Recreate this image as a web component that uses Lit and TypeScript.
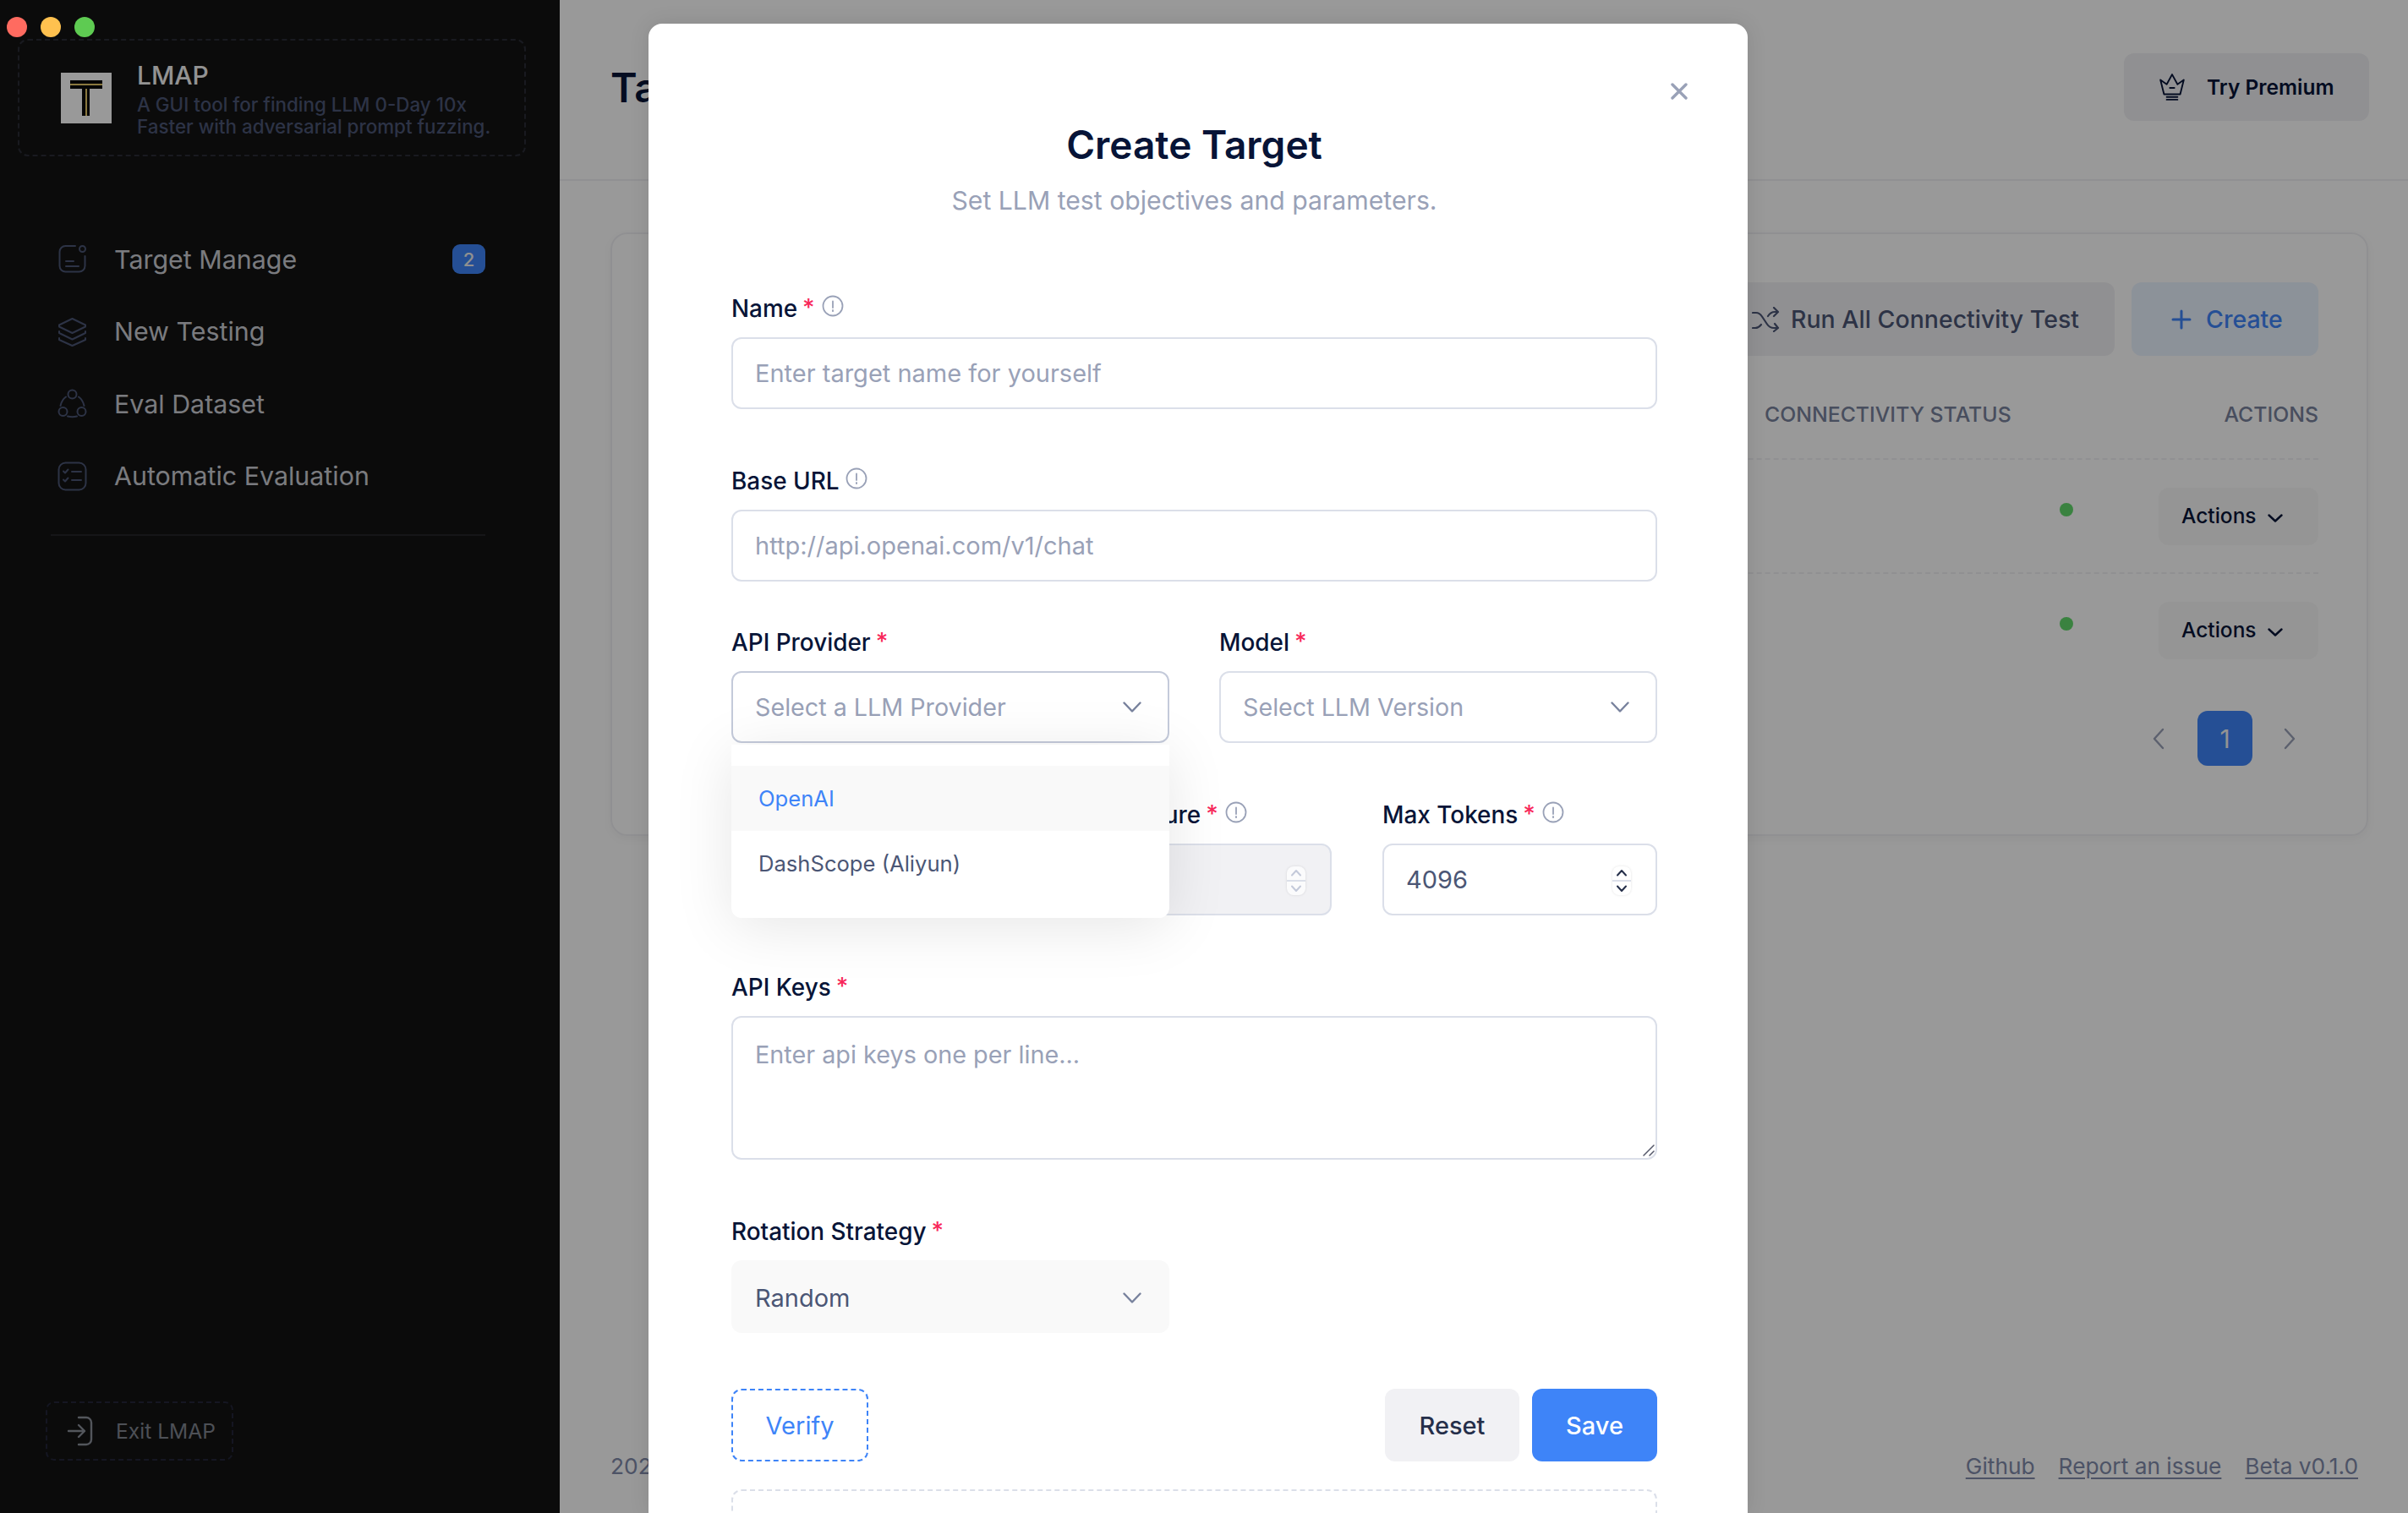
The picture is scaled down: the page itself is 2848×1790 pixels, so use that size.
import { LitElement, html, css } from "lit";
import { customElement } from "lit/decorators.js";

const chev = html`<svg class="chev" viewBox="0 0 22 13"><path d="M1.500 1.500 11 11.500 20.500 1.500"/></svg>`;
const info = html`<svg class="info" viewBox="0 0 26 26"><circle cx="13" cy="13" r="11.500"/><path d="M13 7.500v7.500M13 18v1.200"/></svg>`;
const req = html`<span class="req">*</span>`;
const spin = html`<span class="spin"><svg viewBox="0 0 14 9"><path d="M2 7.500 7 2l5 5.500"/></svg><i></i><svg viewBox="0 0 14 9"><path d="M2 1.500 7 7l5-5.500"/></svg></span>`;

@customElement("app-root")
export class AppRoot extends LitElement {
  static styles = css`
    :host { display: block; font-family: Inter, "Liberation Sans", sans-serif; }
    * { box-sizing: border-box; }
    svg { display: block; flex: none; fill: none; stroke: currentColor; stroke-linecap: round; stroke-linejoin: round; }
    .page { position: relative; display: flex; width: 2848px; height: 1790px; overflow: hidden; background: #fff; }

    /* sidebar */
    .side { width: 662px; flex: none; display: flex; flex-direction: column; background: #131313; color: #4b5675; }
    .lights { position: absolute; left: 8px; top: 20px; display: flex; gap: 16px; z-index: 20; }
    .lights i { width: 24px; height: 24px; border-radius: 50%; }
    .brand { margin: 46px 40px 0 21px; height: 139px; border: 2px dashed #2a2c36; border-radius: 12px; display: flex; align-items: center; padding-left: 49px; gap: 30px; }
    .logo { width: 60px; height: 60px; background: #fff; flex: none; }
    .logo svg { width: 60px; height: 60px; stroke: none; }
    .btext { padding-top: 1px; }
    .bname { font-size: 30px; line-height: 38px; font-weight: 500; color: #f5f5f5; }
    .bdesc { font-size: 22.400px; line-height: 26px; font-weight: 500; color: #4b5675; margin-top: 3px; }
    .nav { margin: 79px 88px 0 60px; display: flex; flex-direction: column; padding-bottom: 26px; border-bottom: 2px solid #252529; }
    .item { height: 85.500px; display: flex; align-items: center; padding-left: 8px; gap: 32px; font-size: 30.400px; color: #ccced4; }
    .item svg { width: 35px; height: 35px; stroke-width: 2; color: #4b5675; }
    .badge { margin-left: auto; width: 39px; height: 35px; border-radius: 9px; background: #3e84f8; color: #f0f0f0; font-size: 22px; font-weight: 500; display: flex; align-items: center; justify-content: center; }
    .exit { margin: auto 0 62px 54px; width: 222px; height: 70px; border: 2px dashed #23263a; border-radius: 10px; display: flex; align-items: center; padding-left: 23px; gap: 26px; font-size: 24.600px; color: #808590; }
    .exit svg { width: 32px; height: 36px; stroke-width: 2.400; color: #8a8f9a; }

    /* main */
    .main { flex: 1; min-width: 0; display: flex; flex-direction: column; }
    .head { height: 214px; flex: none; border-bottom: 2px solid #f1f1f4; display: flex; align-items: center; justify-content: space-between; padding: 0 46px 6px 60px; }
    .head h1 { margin: 0; font-size: 48px; font-weight: 600; color: #071437; }
    .btn { display: inline-flex; align-items: center; border-radius: 12px; font-weight: 500; }
    .premium { width: 290px; height: 80px; background: #f1f1f4; padding-left: 38px; gap: 22px; font-size: 24.500px; font-weight: 600; color: #071437; }
    .premium svg { width: 38px; height: 34px; stroke-width: 1.800; }
    .body { flex: 1; padding: 61px 47px 0 60px; display: flex; flex-direction: column; }
    .card { height: 714px; border: 2px solid #f1f1f4; border-radius: 20px; padding: 57px 57px 0; box-shadow: 0 4px 12px rgba(0,0,0,.04); }
    .tools { display: flex; justify-content: flex-end; gap: 20px; }
    .run, .create { height: 87px; font-size: 28.500px; }
    .run { background: #f1f1f4; color: #4b5675; padding: 0 42px 0 0; gap: 12px; width: 520px; justify-content: flex-end; }
    .run svg { width: 34px; height: 30px; stroke-width: 2.200; }
    .create { width: 221px; background: #e9f3ff; color: #3e84f8; padding-left: 47px; gap: 17px; }
    .create svg { width: 24px; height: 24px; stroke-width: 3; }
    .row { display: grid; grid-template-columns: 1306px 1fr auto; align-items: center; }
    .cols { height: 121px; padding-top: 16px; font-size: 24.800px; font-weight: 500; color: #78829d; text-transform: uppercase; }
    .tr { height: 135px; border-top: 2px dashed #f1f1f4; }
    .dot { width: 16px; height: 16px; border-radius: 50%; background: #62d96c; margin: -16px 0 0 349px; }
    .act { width: 189px; height: 68px; background: #f9f9f9; color: #071437; font-size: 24.500px; padding: 0 0 2px 27px; gap: 13px; }
    .act svg { width: 18px; height: 10px; stroke-width: 2.400; margin-top: 6px; }
    .pager { display: flex; justify-content: flex-end; align-items: center; margin-top: 29px; padding-right: 27px; color: #99a1b7; }
    .pager svg { width: 14px; height: 26px; stroke-width: 2.400; }
    .pnum { width: 65px; height: 65px; margin: 0 37px 0 39px; border-radius: 12px; background: #3e84f8; color: #f5f5f5; font-size: 30px; display: flex; align-items: center; justify-content: center; }
    .foot { margin: auto 0 0; height: 71px; padding: 0 12px 0 0; display: flex; gap: 28px; font-size: 26.300px; line-height: 32px; color: #808aaa; align-items: flex-start; }
    .foot span { margin-right: auto; }
    .foot a { color: #808aaa; text-decoration: underline; text-decoration-thickness: 2px; text-underline-offset: 4px; }

    /* modal */
    .overlay { position: absolute; inset: 0; background: rgba(0,0,0,.4); padding: 28px 0 0 767px; z-index: 10; }
    .modal { position: relative; width: 1300px; height: 1762px; overflow: hidden; background: #fff; border-radius: 16px 16px 0 0; box-shadow: 0 0 24px rgba(0,0,0,.1); padding: 113px 107px 0 98px; }
    .close { position: absolute; top: 70px; right: 71px; width: 20px; height: 20px; stroke-width: 3.400; color: #99a1b7; }
    .modal h2 { margin: 0; text-align: center; font-size: 46px; line-height: 60px; font-weight: 600; color: #071437; }
    .sub { margin: 16px 0 88px; text-align: center; font-size: 30.200px; line-height: 40px; color: #99a1b7; }
    label { height: 40px; display: flex; align-items: center; gap: 6px; font-size: 27.900px; font-weight: 500; color: #071437; white-space: nowrap; }
    .req { color: #f8285a; font-size: 28px; line-height: 1; margin-top: -2px; }
    .info { width: 26px; height: 26px; stroke-width: 1.800; color: #99a1b7; margin: -6px 0 0 2px; }
    .f { margin-bottom: 65px; }
    .f.tight { margin-bottom: 52px; }
    .ctl { display: flex; align-items: center; width: 100%; height: 85px; margin-top: 14px; padding: 0 26px; border: 2px solid #dbdfe9; border-radius: 12px; background: #fff; font: 400 29px Inter, sans-serif; color: #4b5675; outline: none; }
    input.ctl::placeholder, textarea.ctl::placeholder { color: #99a1b7; opacity: 1; }
    .ph { color: #99a1b7; font-size: 28.700px; }
    .chev { width: 22px; height: 13px; margin-left: auto; margin-right: 5px; stroke-width: 2.400; color: #78829d; }
    .two { display: grid; grid-template-columns: 1fr 1fr; gap: 59px; }
    .three { display: grid; grid-template-columns: 1fr 1fr 1fr; gap: 60px; }
    .open { border-color: #c4cada; }
    .dis { background: #f1f1f4; }
    .spin { margin-left: auto; margin-right: 3px; margin-top: 2px; width: 22px; height: 34px; border-radius: 8px; background: #fff; display: flex; flex-direction: column; align-items: center; justify-content: space-between; padding: 3px 0; color: #252f4a; box-shadow: 0 0 3px rgba(0,0,0,.12); }
    .spin svg { width: 14px; height: 9px; stroke-width: 2; }
    .spin i { width: 100%; height: 2px; background: #dbdfe9; }
    .dis .spin { color: #c4cada; background: #fbfbfc; }
    .menu { position: absolute; left: 98px; top: 853px; width: 518px; height: 205px; padding-top: 25px; background: #fff; border-radius: 0 0 12px 12px; box-shadow: 0 10px 70px rgba(0,0,0,.1); z-index: 5; font-size: 25.600px; color: #4b5675; }
    .opt { height: 77px; display: flex; align-items: center; padding-left: 32px; }
    .opt.on { background: #f9f9f9; color: #3e84f8; }
    .area { position: relative; }
    textarea.ctl { display: block; height: 170px; padding: 24px 26px; resize: none; line-height: 40px; font-size: 28.800px; }
    .grip { position: absolute; right: 3px; bottom: 4px; width: 14px; height: 14px; stroke-width: 1.500; color: #55586a; }
    .half { width: 518px; }
    .fill { background: #f9f9f9; border-color: #f9f9f9; height: 86px; padding-top: 2px; }
    .acts { display: flex; gap: 15px; margin-top: 66px; }
    .rot { margin-bottom: 0; }
    .acts .b { height: 86px; border-radius: 12px; display: flex; align-items: center; justify-content: center; font-size: 29px; font-weight: 500; }
    .verify { width: 162px; border: 2px dashed #3e84f8; color: #3e84f8; margin-right: auto; font-weight: 400 !important; }
    .reset { width: 159px; background: #f1f1f4; color: #252f4a; }
    .save { width: 148px; background: #3e84f8; color: #fff; }
    .more { margin-top: 33px; height: 200px; border: 2px dashed #dbdfe9; border-radius: 12px; }
  `;

  render() {
    return html`
      <div class="page">
        <div class="lights">
          <i style="background:#ff6b60"></i><i style="background:#ffc14f"></i><i style="background:#5ecb52"></i>
        </div>
        <aside class="side">
          <div class="brand">
            <div class="logo">
              <svg viewBox="0 0 60 60">
                <rect x="11" y="9" width="38" height="4" fill="#0b0b0b"/>
                <rect x="11" y="13" width="38" height="2" fill="#e6c868"/>
                <rect x="11" y="15" width="38" height="4" fill="#0b0b0b"/>
                <rect x="25" y="19" width="4" height="32" fill="#0b0b0b"/>
                <rect x="29" y="19" width="2" height="32" fill="#e6c868"/>
                <rect x="31" y="19" width="3" height="32" fill="#0b0b0b"/>
              </svg>
            </div>
            <div class="btext">
              <div class="bname">LMAP</div>
              <div class="bdesc">A GUI tool for finding LLM 0-Day 10x<br />Faster with adversarial prompt fuzzing.</div>
            </div>
          </div>
          <nav class="nav">
            <div class="item">
              <svg viewBox="0 0 35 35"><path d="M21 2H9.500a7 7 0 0 0-7 7v16.500a7 7 0 0 0 7 7h16a7 7 0 0 0 7-7V14"/><circle cx="29.500" cy="5.500" r="3.500"/><path d="M10 20h9M10 26h15"/></svg>
              Target Manage<span class="badge">2</span>
            </div>
            <div class="item">
              <svg viewBox="0 0 35 35"><path d="M17.500 2 33 9.500v2L17.500 19 2 11.500v-2z"/><path d="M2 17v2l15.500 7.500L33 19v-2"/><path d="M2 25v2l15.500 7L33 27v-2"/></svg>
              New Testing
            </div>
            <div class="item">
              <svg viewBox="0 0 35 35"><circle cx="17.500" cy="6.500" r="5"/><circle cx="6.500" cy="27" r="5"/><circle cx="28.500" cy="27" r="5"/><path d="M10 9.500C6.500 12 4.500 15.500 3.500 20M25 9.500c3.500 2.500 5.500 6 6.500 10.500M12 32.500c3.500 1 7.500 1 11 0"/></svg>
              Eval Dataset
            </div>
            <div class="item">
              <svg viewBox="0 0 35 35"><rect x="1.500" y="1.500" width="32" height="32" rx="8"/><path d="m7 11.500 2 2 3.500-4M7 21.500l2 2 3.500-4M17 12h11M17 22h11"/></svg>
              Automatic Evaluation
            </div>
          </nav>
          <div class="exit">
            <svg viewBox="0 0 32 36"><path d="M14 2h9a6 6 0 0 1 6 6v20a6 6 0 0 1-6 6h-9"/><path d="M2 18h19M14 11l7 7-7 7"/></svg>
            Exit LMAP
          </div>
        </aside>

        <main class="main">
          <header class="head">
            <h1>Target Manage</h1>
            <div class="btn premium">
              <svg viewBox="0 0 32 32"><path d="M7 24 3 8l7 5 6-11 6 11 7-5-4 16z"/><path d="M13.500 17h5M10 27h12M10 30h12"/></svg>
              Try Premium
            </div>
          </header>
          <div class="body">
            <section class="card">
              <div class="tools">
                <div class="btn run">
                  <svg viewBox="0 0 34 30"><path d="M1 7h4c3 0 5 1.500 7 4.500l6 9c2 3 4 4.500 8 4.500h3M1 25h3c3 0 5-1.500 7-4M19 11c2-3 4-5 8-5h3"/><path d="m26 1 5 5-5 5M27 20l4 5-5 4"/></svg>
                  Run All Connectivity Test
                </div>
                <div class="btn create">
                  <svg viewBox="0 0 24 24"><path d="M12 2v20M2 12h20"/></svg>
                  Create
                </div>
              </div>
              <div class="row cols"><span></span><span>Connectivity Status</span><span>Actions</span></div>
              <div class="row tr"><span></span><div class="dot"></div>
                <div class="btn act">Actions<svg viewBox="0 0 18 10"><path d="m1.500 1.500 7.500 7 7.500-7"/></svg></div></div>
              <div class="row tr"><span></span><div class="dot"></div>
                <div class="btn act">Actions<svg viewBox="0 0 18 10"><path d="m1.500 1.500 7.500 7 7.500-7"/></svg></div></div>
              <div class="pager">
                <svg viewBox="0 0 14 26"><path d="M12 2 2 13l10 11"/></svg>
                <div class="pnum">1</div>
                <svg viewBox="0 0 14 26"><path d="m2 2 10 11L2 24"/></svg>
              </div>
            </section>
            <footer class="foot">
              <span>2025</span>
              <a>Github</a><a>Report an issue</a><a>Beta v0.1.0</a>
            </footer>
          </div>
        </main>

        <div class="overlay">
          <div class="modal">
            <svg class="close" viewBox="0 0 20 20"><path d="m2 2 16 16M18 2 2 18"/></svg>
            <h2>Create Target</h2>
            <div class="sub">Set LLM test objectives and parameters.</div>

            <div class="f">
              <label>Name ${req} ${info}</label>
              <input class="ctl" placeholder="Enter target name for yourself" />
            </div>
            <div class="f tight">
              <label>Base URL ${info}</label>
              <input class="ctl" placeholder="http://api.openai.com/v1/chat" />
            </div>
            <div class="two f">
              <div><label>API Provider ${req}</label>
                <div class="ctl open"><span class="ph">Select a LLM Provider</span>${chev}</div></div>
              <div><label>Model ${req}</label>
                <div class="ctl"><span class="ph">Select LLM Version</span>${chev}</div></div>
            </div>
            <div class="three f">
              <div><label></label><div class="ctl"></div></div>
              <div><label>Temperature ${req} ${info}</label>
                <div class="ctl dis">${spin}</div></div>
              <div><label>Max Tokens ${req} ${info}</label>
                <div class="ctl">4096${spin}</div></div>
            </div>
            <div class="f area">
              <label>API Keys ${req}</label>
              <textarea class="ctl" placeholder="Enter api keys one per line..."></textarea>
              <svg class="grip" viewBox="0 0 14 14"><path d="M1 13 13 1M8 13l5-5"/></svg>
            </div>
            <div class="f rot">
              <label>Rotation Strategy ${req}</label>
              <div class="ctl half fill">Random${chev}</div>
            </div>
            <div class="acts">
              <div class="b verify">Verify</div>
              <div class="b reset">Reset</div>
              <div class="b save">Save</div>
            </div>
            <div class="more"></div>

            <div class="menu">
              <div class="opt on">OpenAI</div>
              <div class="opt">DashScope (Aliyun)</div>
            </div>
          </div>
        </div>
      </div>
    `;
  }
}
